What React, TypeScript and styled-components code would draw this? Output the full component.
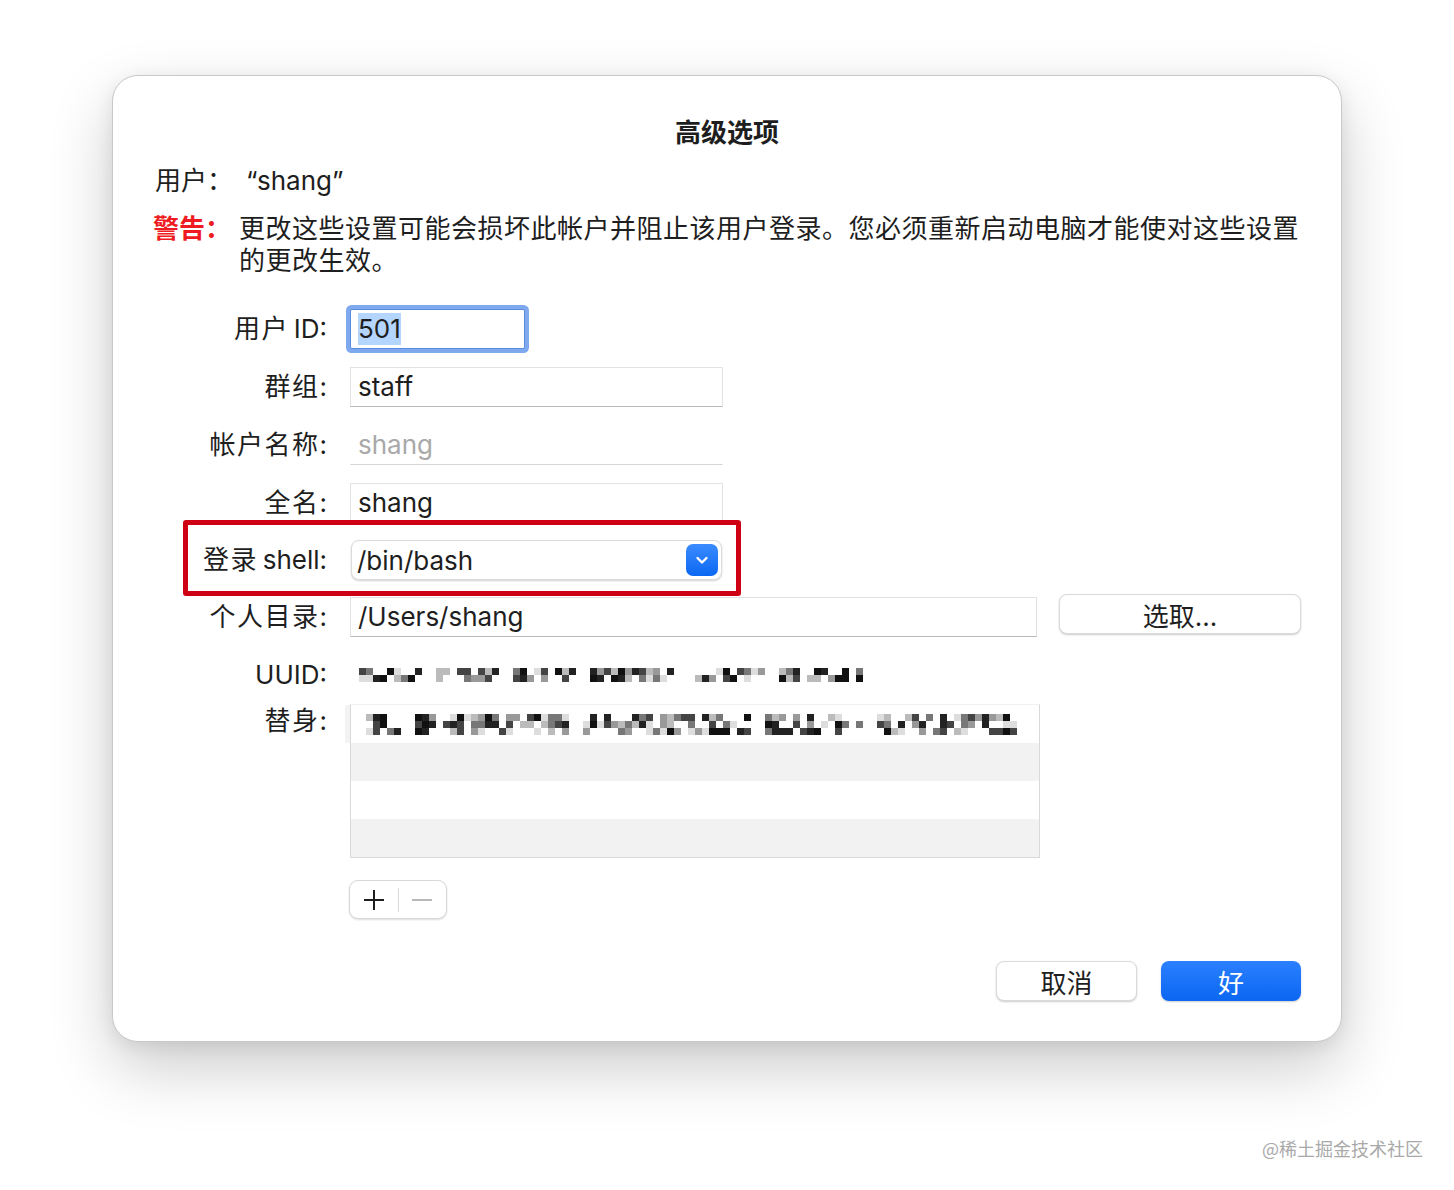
import React from "react";
import styled, { createGlobalStyle } from "styled-components";

const GlobalStyle = createGlobalStyle`
  html, body {
    margin: 0;
    padding: 0;
    background: #ffffff;
  }
  body {
    font-family: "Inter", "Noto Sans CJK SC", "Noto Sans", sans-serif;
    color: #1e1e1e;
  }
`;

const Page = styled.div`
  width: 1454px;
  height: 1190px;
  padding-top: 75px;
  box-sizing: border-box;
  position: relative;
`;

const Dialog = styled.div`
  margin-left: 112px;
  width: 1230px;
  height: 967px;
  box-sizing: border-box;
  background: #ffffff;
  border-radius: 26px;
  border: 1px solid #c9c9c9;
  box-shadow: 0 26px 64px rgba(0, 0, 0, 0.2), 0 4px 18px rgba(0, 0, 0, 0.08);
  padding: 39px 40px 40px 40px;
  display: flex;
  flex-direction: column;
  font-size: 26px;
`;

const Title = styled.div`
  text-align: center;
  font-weight: 700;
  line-height: 36px;
  height: 36px;
`;

const UserLine = styled.div`
  margin-top: 12px;
  line-height: 36px;
  display: flex;
  padding-left: 2px;
  .k {
    width: 91px;
  }
`;

const Warning = styled.div`
  margin-top: 14px;
  display: flex;
  line-height: 32px;
  .k {
    width: 86px;
    flex-shrink: 0;
    color: #ee1c22;
    font-weight: 700;
  }
  .t {
    flex: 1;
    letter-spacing: 0.5px;
  }
`;

const Form = styled.div`
  margin-top: 23px;
  display: flex;
  flex-direction: column;
`;

const Row = styled.div<{ $h?: number; $top?: boolean }>`
  display: flex;
  align-items: ${(p) => (p.$top ? "flex-start" : "center")};
  height: ${(p) => p.$h ?? 58}px;
  position: relative;
`;

const Label = styled.div`
  width: 197px;
  flex-shrink: 0;
  text-align: right;
  padding-right: 23px;
  box-sizing: border-box;
  line-height: 34px;
  white-space: nowrap;
`;

const Cjk = styled.span`
  letter-spacing: 1.5px;
`;

const Input = styled.div<{ $w: number; $focus?: boolean; $plain?: boolean }>`
  width: ${(p) => p.$w}px;
  height: 40px;
  box-sizing: border-box;
  background: #fff;
  border: 1px solid #e2e2e2;
  border-bottom-color: #b9b9b9;
  display: flex;
  align-items: center;
  padding-left: 7px;
  line-height: 34px;
  ${(p) =>
    p.$focus &&
    `
    border-color: #5a8de0;
    border-radius: 2px;
    box-shadow: 0 0 0 4px #7ea9ef;
  `}
  ${(p) =>
    p.$plain &&
    `
    border-color: transparent;
    border-bottom-color: #d6d6d6;
    color: #a9a9a9;
  `}
`;

const Selected = styled.span`
  background: #b4d5fe;
  line-height: 32px;
`;

const Popup = styled.div`
  margin-left: 1px;
  width: 371px;
  height: 40px;
  box-sizing: border-box;
  border-radius: 8px;
  background: #fff;
  border: 1px solid #dcdcdc;
  box-shadow: 0 1px 2px rgba(0, 0, 0, 0.18);
  display: flex;
  align-items: center;
  justify-content: space-between;
  padding: 0 3px 0 5px;
`;

const PopupArrow = styled.div`
  width: 32px;
  height: 32px;
  border-radius: 7px;
  background: linear-gradient(#3b8bff, #0b68f2);
  display: flex;
  align-items: center;
  justify-content: center;
`;

const Highlight = styled.div`
  position: absolute;
  left: 30px;
  top: -12px;
  width: 558px;
  height: 76px;
  box-sizing: border-box;
  border: 5px solid #cf0014;
  border-radius: 3px;
  pointer-events: none;
`;

const Button = styled.div<{ $w: number; $primary?: boolean }>`
  width: ${(p) => p.$w}px;
  height: 40px;
  box-sizing: border-box;
  border-radius: 8px;
  display: flex;
  align-items: center;
  justify-content: center;
  font-size: 26px;
  background: ${(p) => (p.$primary ? "linear-gradient(#2a80ff, #0b66f1)" : "#fff")};
  color: ${(p) => (p.$primary ? "#fff" : "#1e1e1e")};
  border: ${(p) => (p.$primary ? "none" : "1px solid #dadada")};
  box-shadow: 0 1px 2px rgba(0, 0, 0, 0.2);
`;

const PickWrap = styled.div`
  margin-left: 22px;
  margin-top: -6px;
`;

const MosaicWrap = styled.div`
  padding-left: 9px;
`;

const Mosaic = styled.svg`
  display: block;
`;

const ListBox = styled.div`
  width: 690px;
  box-sizing: border-box;
  border: 1px solid #d9d9d9;
  border-top-color: #f2f2f2;
  position: relative;
  &::before {
    content: "";
    position: absolute;
    left: -6px;
    top: 0;
    width: 5px;
    height: 38px;
    background: #f3f3f3;
  }
`;

const ListRow = styled.div<{ $alt?: boolean }>`
  height: 38px;
  background: ${(p) => (p.$alt ? "#f2f2f2" : "#fff")};
  display: flex;
  align-items: center;
  padding-left: 15px;
`;

const Segmented = styled.div`
  margin-top: 23px;
  margin-left: 196px;
  width: 98px;
  height: 39px;
  box-sizing: border-box;
  border-radius: 9px;
  border: 1px solid #d8d8d8;
  box-shadow: 0 1px 2px rgba(0, 0, 0, 0.14);
  display: flex;
  align-items: center;
  background: #fff;
`;

const SegItem = styled.div`
  flex: 1;
  height: 100%;
  display: flex;
  align-items: center;
  justify-content: center;
`;

const SegDivider = styled.div`
  width: 1px;
  height: 24px;
  background: #d8d8d8;
`;

const Footer = styled.div`
  margin-top: auto;
  display: flex;
  justify-content: flex-end;
  gap: 24px;
`;

const Watermark = styled.div`
  position: absolute;
  right: 31px;
  bottom: 29px;
  font-size: 18px;
  color: #a9a9a9;
  font-family: "Noto Sans CJK SC", sans-serif;
`;

function rng(seed: number) {
  let s = seed;
  return () => {
    s = (s * 1103515245 + 12345) % 2147483648;
    return s / 2147483648;
  };
}

const shades = ["#111", "#222", "#444", "#777", "#999", "#bbb", "#ddd"];

function MosaicBlock({ width, height, cell, seed, gaps }: { width: number; height: number; cell: number; seed: number; gaps: number[] }) {
  const r = rng(seed);
  const cols = Math.floor(width / cell);
  const rows = Math.round(height / cell);
  const rects: React.ReactNode[] = [];
  for (let c = 0; c < cols; c++) {
    if (gaps.includes(c)) continue;
    for (let y = 0; y < rows; y++) {
      const v = r();
      if (v < 0.35) continue;
      const col = shades[Math.floor(r() * shades.length)];
      rects.push(<rect key={`${c}-${y}`} x={c * cell} y={y * cell} width={cell} height={cell} fill={col} />);
    }
  }
  return (
    <Mosaic width={width} height={height}>
      {rects}
    </Mosaic>
  );
}

export default function App() {
  return (
    <Page>
      <GlobalStyle />
      <Dialog>
        <Title>高级选项</Title>
        <UserLine>
          <span className="k">用户：</span>
          <span>“shang”</span>
        </UserLine>
        <Warning>
          <span className="k">警告：</span>
          <span className="t">
            更改这些设置可能会损坏此帐户并阻止该用户登录。您必须重新启动电脑才能使对这些设置的更改生效。
          </span>
        </Warning>
        <Form>
          <Row>
            <Label>
              <Cjk>用户</Cjk>
              {"\u2009"}ID:
            </Label>
            <Input $w={175} $focus>
              <Selected>501</Selected>
            </Input>
          </Row>
          <Row>
            <Label>
              <Cjk>群组</Cjk>:
            </Label>
            <Input $w={373}>staff</Input>
          </Row>
          <Row>
            <Label>
              <Cjk>帐户名称</Cjk>:
            </Label>
            <Input $w={373} $plain>
              shang
            </Input>
          </Row>
          <Row>
            <Label>
              <Cjk>全名</Cjk>:
            </Label>
            <Input $w={373}>shang</Input>
          </Row>
          <Row $h={56}>
            <Label>
              <Cjk>登录</Cjk>
              {"\u2009"}shell:
            </Label>
            <Popup>
              <span>/bin/bash</span>
              <PopupArrow>
                <svg width="16" height="16" viewBox="0 0 16 16">
                  <polyline points="3.5,6 8,10.5 12.5,6" fill="none" stroke="#fff" strokeWidth="2.4" strokeLinecap="round" strokeLinejoin="round" />
                </svg>
              </PopupArrow>
            </Popup>
            <Highlight />
          </Row>
          <Row>
            <Label>
              <Cjk>个人目录</Cjk>:
            </Label>
            <Input $w={689}>/Users/shang</Input>
            <PickWrap>
              <Button $w={242}>选取...</Button>
            </PickWrap>
          </Row>
          <Row>
            <Label>UUID:</Label>
            <MosaicWrap>
              <MosaicBlock width={560} height={14} cell={7} seed={7} gaps={[9, 10, 20, 21, 31, 32, 46, 47, 58, 59, 72, 73, 74, 75, 76, 77, 78, 79]} />
            </MosaicWrap>
          </Row>
          <Row $h={153} $top>
            <Label>
              <Cjk>替身</Cjk>:
            </Label>
            <ListBox>
              <ListRow>
                <MosaicBlock width={652} height={21} cell={7} seed={31} gaps={[5, 6, 29, 30, 55, 56, 71, 72]} />
              </ListRow>
              <ListRow $alt />
              <ListRow />
              <ListRow $alt />
            </ListBox>
          </Row>
        </Form>
        <Segmented>
          <SegItem>
            <svg width="22" height="22" viewBox="0 0 22 22">
              <path d="M11 1v20M1 11h20" stroke="#1e1e1e" strokeWidth="2" />
            </svg>
          </SegItem>
          <SegDivider />
          <SegItem>
            <svg width="22" height="22" viewBox="0 0 22 22">
              <path d="M1 11h20" stroke="#b9b9b9" strokeWidth="2" />
            </svg>
          </SegItem>
        </Segmented>
        <Footer>
          <Button $w={141}>取消</Button>
          <Button $w={140} $primary>
            好
          </Button>
        </Footer>
      </Dialog>
      <Watermark>@稀土掘金技术社区</Watermark>
    </Page>
  );
}
